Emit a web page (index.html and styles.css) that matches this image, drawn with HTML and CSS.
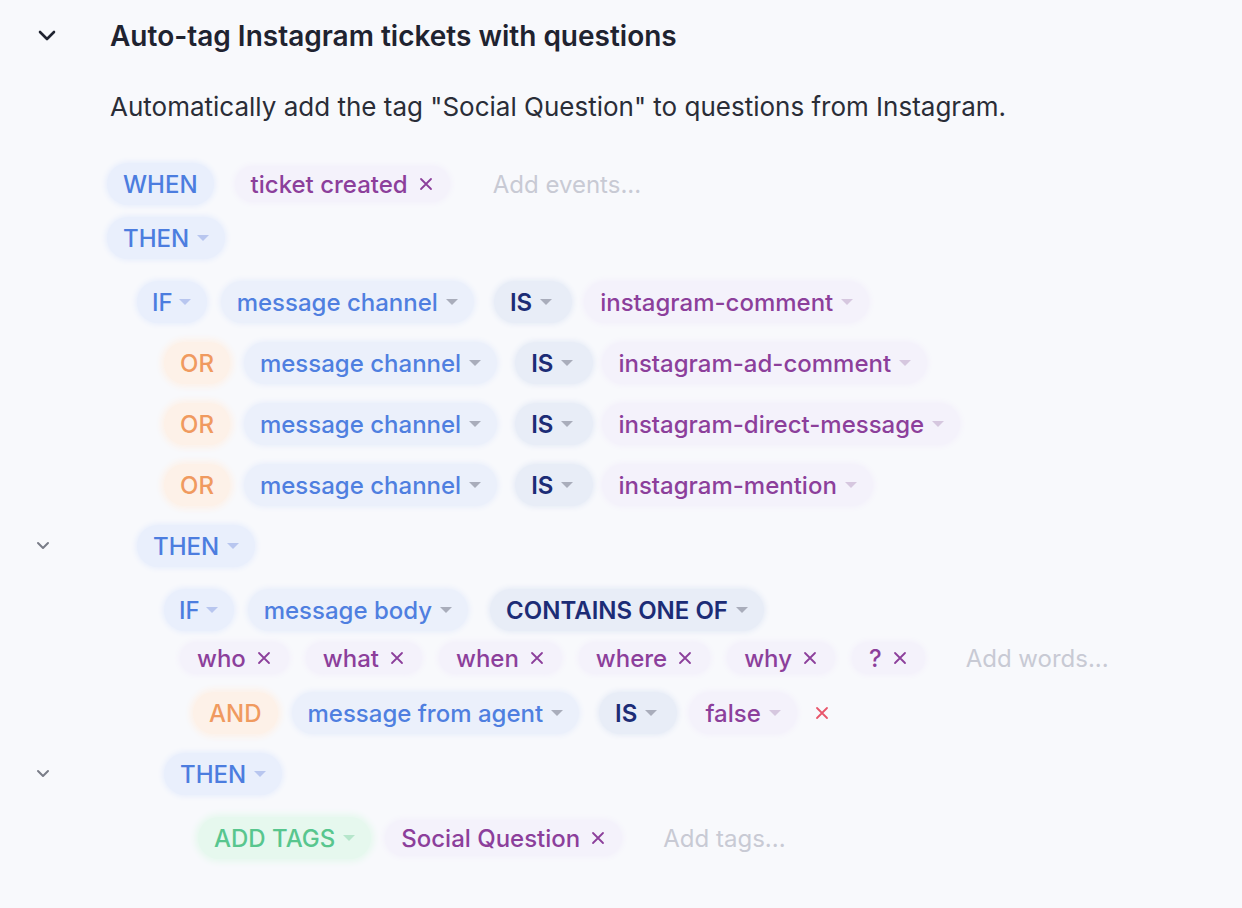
FILE: index.html
```html
<!DOCTYPE html>
<html lang="en">
<head>
<meta charset="utf-8">
<title>Auto-tag Instagram tickets with questions</title>
<link rel="stylesheet" href="styles.css">
</head>
<body>
<div class="rule">
  <div class="head">
    <span class="gut"><svg class="chev-lg" viewBox="0 0 18 12"><path d="M2 2l7 7 7-7"/></svg></span>
    <h1 class="title">Auto-tag Instagram tickets with questions</h1>
  </div>
  <p class="desc">Automatically add the tag "Social Question" to questions from Instagram.</p>

  <div class="rows">
    <div class="row">
      <span class="gut"></span>
      <div class="line">
        <span class="pill blue">WHEN</span>
        <span class="pill val tag ml7">ticket created <svg class="x" viewBox="0 0 16 16"><path d="M3 3l10 10M13 3L3 13"/></svg></span>
        <span class="ph ml29">Add events...</span>
      </div>
    </div>
    <div class="row r-tight">
      <span class="gut"></span>
      <div class="line">
        <span class="pill blue">THEN <i class="caret c-lblue"></i></span>
      </div>
    </div>
    <div class="row r-loose">
      <span class="gut"></span>
      <div class="line ind1">
        <span class="pill blue short">IF <i class="caret c-lblue"></i></span>
        <span class="pill field">message channel <i class="caret c-gray"></i></span>
        <span class="pill op">IS <i class="caret c-gray"></i></span>
        <span class="pill val">instagram-comment <i class="caret c-purple"></i></span>
      </div>
    </div>
    <div class="row">
      <span class="gut"></span>
      <div class="line ind2 or">
        <span class="pill orange">OR</span>
        <span class="pill field">message channel <i class="caret c-gray"></i></span>
        <span class="pill op">IS <i class="caret c-gray"></i></span>
        <span class="pill val">instagram-ad-comment <i class="caret c-purple"></i></span>
      </div>
    </div>
    <div class="row">
      <span class="gut"></span>
      <div class="line ind2 or">
        <span class="pill orange">OR</span>
        <span class="pill field">message channel <i class="caret c-gray"></i></span>
        <span class="pill op">IS <i class="caret c-gray"></i></span>
        <span class="pill val">instagram-direct-message <i class="caret c-purple"></i></span>
      </div>
    </div>
    <div class="row">
      <span class="gut"></span>
      <div class="line ind2 or">
        <span class="pill orange">OR</span>
        <span class="pill field">message channel <i class="caret c-gray"></i></span>
        <span class="pill op">IS <i class="caret c-gray"></i></span>
        <span class="pill val">instagram-mention <i class="caret c-purple"></i></span>
      </div>
    </div>
    <div class="row">
      <span class="gut"><svg class="chev-sm" viewBox="0 0 14 10"><path d="M2 2l5 5 5-5"/></svg></span>
      <div class="line ind1">
        <span class="pill blue">THEN <i class="caret c-lblue"></i></span>
      </div>
    </div>
    <div class="row r-loose">
      <span class="gut"></span>
      <div class="line ind2">
        <span class="pill blue short">IF <i class="caret c-lblue"></i></span>
        <span class="pill field">message body <i class="caret c-gray"></i></span>
        <span class="pill op strong">CONTAINS ONE OF <i class="caret c-gray"></i></span>
      </div>
    </div>
    <div class="row r-words">
      <span class="gut"></span>
      <div class="line words ind3">
        <span class="pill val word">who <svg class="x" viewBox="0 0 16 16"><path d="M3 3l10 10M13 3L3 13"/></svg></span>
        <span class="pill val word">what <svg class="x" viewBox="0 0 16 16"><path d="M3 3l10 10M13 3L3 13"/></svg></span>
        <span class="pill val word">when <svg class="x" viewBox="0 0 16 16"><path d="M3 3l10 10M13 3L3 13"/></svg></span>
        <span class="pill val word">where <svg class="x" viewBox="0 0 16 16"><path d="M3 3l10 10M13 3L3 13"/></svg></span>
        <span class="pill val word">why <svg class="x" viewBox="0 0 16 16"><path d="M3 3l10 10M13 3L3 13"/></svg></span>
        <span class="pill val word">? <svg class="x" viewBox="0 0 16 16"><path d="M3 3l10 10M13 3L3 13"/></svg></span>
        <span class="ph ml24">Add words...</span>
      </div>
    </div>
    <div class="row r-18">
      <span class="gut"></span>
      <div class="line ind4">
        <span class="pill orange">AND</span>
        <span class="pill field">message from agent <i class="caret c-gray"></i></span>
        <span class="pill op">IS <i class="caret c-gray"></i></span>
        <span class="pill val">false <i class="caret c-purple"></i></span>
        <svg class="x x-red" viewBox="0 0 16 16"><path d="M3 3l10 10M13 3L3 13"/></svg>
      </div>
    </div>
    <div class="row">
      <span class="gut"><svg class="chev-sm" viewBox="0 0 14 10"><path d="M2 2l5 5 5-5"/></svg></span>
      <div class="line ind2">
        <span class="pill blue">THEN <i class="caret c-lblue"></i></span>
      </div>
    </div>
    <div class="row r-loose">
      <span class="gut"></span>
      <div class="line ind5">
        <span class="pill green">ADD TAGS <i class="caret c-green"></i></span>
        <span class="pill val tag">Social Question <svg class="x" viewBox="0 0 16 16"><path d="M3 3l10 10M13 3L3 13"/></svg></span>
        <span class="ph ml27">Add tags...</span>
      </div>
    </div>
  </div>
</div>
</body>
</html>
```

FILE: styles.css
```css
* { box-sizing: border-box; }
html, body { margin: 0; padding: 0; }
body {
  background: #f8f9fc;
  font-family: Inter, "Noto Sans", sans-serif;
  color: #1f2330;
  width: 1242px;
  height: 908px;
  overflow: hidden;
}
.rule { padding-top: 19px; }
.head { display: flex; align-items: center; height: 34px; }
.gut {
  width: 107px;
  flex: none;
  display: flex;
  align-items: center;
}
.chev-lg {
  width: 18px; height: 12px; margin-left: 38px;
  fill: none; stroke: #1f2330; stroke-width: 2.6; stroke-linecap: round; stroke-linejoin: round;
}
.chev-sm {
  width: 14px; height: 10px; margin-left: 36px;
  fill: none; stroke: #7a7d88; stroke-width: 2; stroke-linecap: round; stroke-linejoin: round;
}
.title {
  margin: 0 0 0 3px;
  font-size: 28px;
  line-height: 34px;
  font-weight: 600;
  color: #1f2330;
}
.desc {
  margin: 38px 0 0 110px;
  font-size: 26px;
  line-height: 32px;
  font-weight: 400;
  color: #2a2d37;
}
.rows {
  margin-top: 40px;
  display: flex;
  flex-direction: column;
}
.row { display: flex; align-items: center; margin-top: 19px; }
.row:first-child { margin-top: 0; }
.row.r-tight { margin-top: 12px; }
.row.r-loose { margin-top: 22px; }
.row.r-words { margin-top: 11px; }
.row.r-18 { margin-top: 18px; }
.line {
  display: flex;
  align-items: center;
  gap: 14px;
  height: 42px;
}
.line.words { height: 32px; gap: 17px; }
.ind1 { padding-left: 30px; }
.ind2 { padding-left: 57px; }
.ind3 { padding-left: 73px; }
.ind4 { padding-left: 86px; }
.ind5 { padding-left: 91px; }

.pill {
  display: inline-flex;
  align-items: center;
  gap: 8px;
  height: 42px;
  padding: 0 16px;
  border-radius: 21px;
  font-size: 24px;
  font-weight: 500;
  white-space: nowrap;
}
.pill.short { gap: 6px; padding: 0 16px 0 15px; }
.blue { background: #e9effc; color: #4c7ddf; box-shadow: 0 0 5px 2px #e9effc; }
.field { background: #ebf0fb; color: #4f7fe0; box-shadow: 0 0 5px 2px #ebf0fb; }
.op { background: #e8edf7; color: #1c2c76; font-weight: 600; box-shadow: 0 0 5px 2px #e8edf7; margin-left: 6px; margin-right: -2px; padding-right: 20px; }
.or .op { margin-left: 4px; margin-right: -5px; }
.op.strong { margin-left: 8px; margin-right: 0; padding-right: 16px; }
.val { background: #f4f2fb; color: #8c3f9b; box-shadow: 0 0 5px 2px #f4f2fb; }
.orange { background: #fdf1e8; color: #f09a5f; box-shadow: 0 0 6px 3px #fdf1e8; }
.green { background: #e6f8ee; color: #58c68e; box-shadow: 0 0 6px 3px #e6f8ee; }
.tag { height: 36px; gap: 10px; }
.word { height: 32px; gap: 10px; padding: 0 17px; }
.ml7 { margin-left: 7px; }
.ml24 { margin-left: 24px; }
.ml27 { margin-left: 27px; }
.ml29 { margin-left: 29px; }

.ph { font-size: 24px; color: #c8cad4; white-space: nowrap; }

.caret {
  display: inline-block;
  width: 0; height: 0;
  border-left: 6px solid transparent;
  border-right: 6px solid transparent;
  border-top: 6px solid #aeb2c0;
}
.c-lblue { border-top-color: #b8c6ef; }
.c-gray { border-top-color: #a9adbb; }
.c-purple { border-top-color: #d6c7df; }
.c-green { border-top-color: #b6e6cb; }

.x {
  width: 16px; height: 16px;
  fill: none; stroke: #8c3f9b; stroke-width: 1.8; stroke-linecap: round;
}
.x-red { stroke: #e8566b; margin-left: 3px; }
```
